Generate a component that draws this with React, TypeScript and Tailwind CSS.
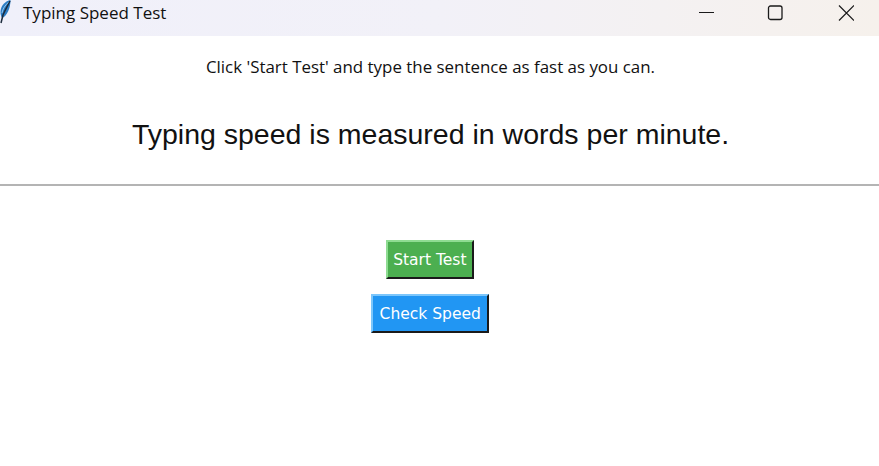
import React from 'react';

const Feather = () => (
  <svg width="12" height="24" viewBox="0 0 12 24" className="shrink-0">
    <path d="M10.5 0 C5.5 1 1 5.5 0.5 11 C0.3 14 1 16.5 2.2 18 C7 16 10.5 8 10.5 0Z" fill="#2b7cc4" />
    <path d="M9 2 C5 5 2.6 9 2 13" fill="none" stroke="#8fc4ee" strokeWidth="1" />
    <path d="M10 1 C7.5 6 5 10 3 15 L1 23" fill="none" stroke="#1c2b3c" strokeWidth="1.5" />
  </svg>
);

const TitleBar = () => (
  <div className="h-9 flex items-center pb-[10px] bg-gradient-to-r from-[#f0f0fa] via-[#f2f1f8] to-[#f6f1ec]">
    <div className="w-[23px] -mt-[2px] shrink-0">
      <Feather />
    </div>
    <span className="flex-1 text-[17px] text-[#111111] font-['Open_Sans','Noto_Sans',sans-serif]">Typing Speed Test</span>
    <div className="flex items-center pr-[25px]">
      <svg width="16" height="16" viewBox="0 0 16 16"><path d="M1 7.5H16" stroke="#1a1a1a" strokeWidth="1" /></svg>
      <svg width="16" height="16" viewBox="0 0 16 16" className="ml-[53px]"><rect x="1.5" y="1" width="13.5" height="13.5" rx="2" fill="none" stroke="#1a1a1a" strokeWidth="1.3" /></svg>
      <svg width="16" height="16" viewBox="0 0 16 16" className="ml-[55px]"><path d="M1 0.5L16 15.5M16 0.5L1 15.5" stroke="#1a1a1a" strokeWidth="1.2" /></svg>
    </div>
  </div>
);

const RaisedButton = ({ label, className }: { label: string; className: string }) => (
  <button className={`h-[39px] border-2 border-b-[#1a1a1a] border-r-[#1a1a1a] text-white text-[16px] font-['DejaVu_Sans',sans-serif] ${className}`}>
    <span className="inline-block scale-x-[0.97] whitespace-nowrap">{label}</span>
  </button>
);

export default function App() {
  return (
    <div className="w-[879px] h-[466px] bg-white overflow-hidden flex flex-col">
      <TitleBar />
      <div className="h-[150px] flex flex-col items-center pr-[18px] border-b-2 border-[#b4b4b4]">
        <p className="mt-[20px] h-[22px] leading-[22px] text-[16.9px] text-[#111111] whitespace-nowrap font-['Open_Sans','Noto_Sans',sans-serif]">
          Click 'Start Test' and type the sentence as fast as you can.
        </p>
        <h1 className="mt-[40px] text-[28.5px] leading-[32px] text-[#111111] whitespace-nowrap font-['Liberation_Sans',Arial,sans-serif]">
          Typing speed is measured in words per minute.
        </h1>
      </div>
      <div className="flex flex-col items-center pr-[19px] pt-[54px] gap-[15px]">
        <RaisedButton label="Start Test" className="w-[88px] bg-[#4caf50] border-t-[#8fdc92] border-l-[#8fdc92]" />
        <RaisedButton label="Check Speed" className="w-[118px] bg-[#2196f3] border-t-[#7cc6fb] border-l-[#7cc6fb]" />
      </div>
    </div>
  );
}
